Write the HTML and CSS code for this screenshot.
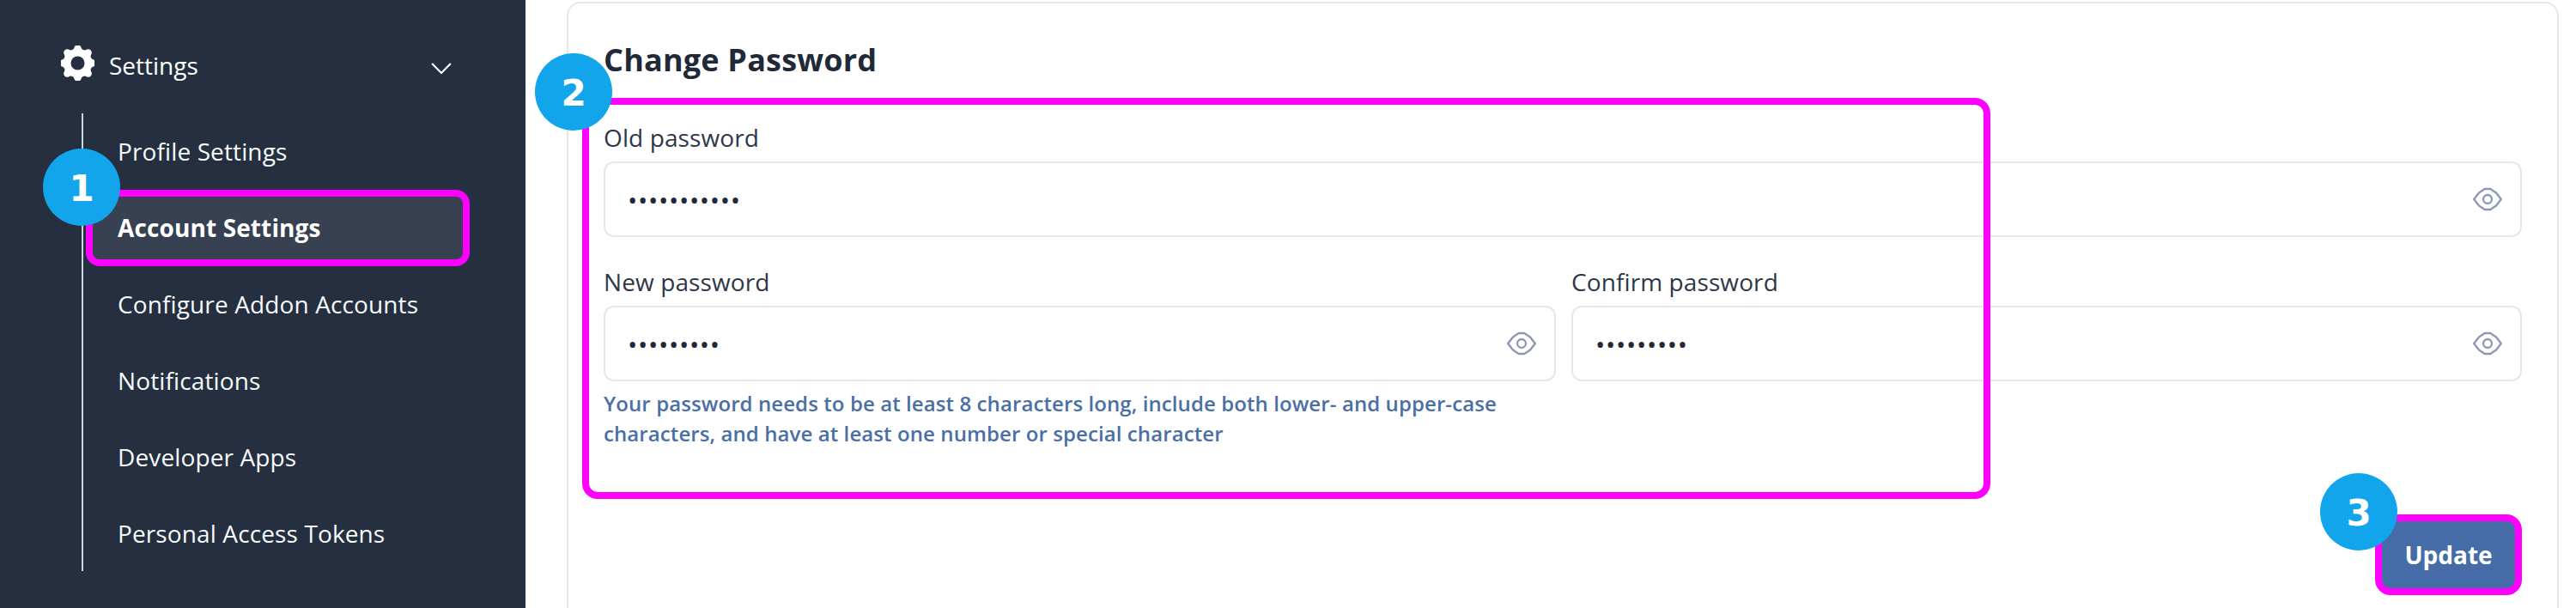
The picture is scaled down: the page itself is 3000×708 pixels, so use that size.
FILE: index.html
```html
<!DOCTYPE html>
<html lang="en">
<head>
    <meta charset="UTF-8">
    <title>Account Settings</title>
    <link rel="stylesheet" href="styles.css">
</head>
<body>
    <div class="page">
        <aside class="sidebar">
            <div class="nav-head">
                <svg class="gear" viewBox="2.7 2.4 14.6 15.2"><path fill-rule="evenodd" d="M11.49 3.17c-.38-1.56-2.6-1.56-2.98 0a1.532 1.532 0 01-2.286.948c-1.372-.836-2.942.734-2.106 2.106.54.886.061 2.042-.947 2.287-1.561.379-1.561 2.6 0 2.978a1.532 1.532 0 01.947 2.287c-.836 1.372.734 2.942 2.106 2.106a1.532 1.532 0 012.287.947c.379 1.561 2.6 1.561 2.978 0a1.533 1.533 0 012.287-.947c1.372.836 2.942-.734 2.106-2.106a1.533 1.533 0 01.947-2.287c1.561-.379 1.561-2.6 0-2.978a1.532 1.532 0 01-.947-2.287c.836-1.372-.734-2.942-2.106-2.106a1.532 1.532 0 01-2.287-.947zM10 13a3 3 0 100-6 3 3 0 000 6z"/></svg>
                <span class="nav-title">Settings</span>
                <svg class="chevron" viewBox="0 0 22 12"><path d="M1 1l10 10L21 1"/></svg>
            </div>
            <div class="sub-nav">
                <ul>
                    <li>Profile Settings</li>
                    <li class="active">Account Settings</li>
                    <li>Configure Addon Accounts</li>
                    <li>Notifications</li>
                    <li>Developer Apps</li>
                    <li>Personal Access Tokens</li>
                </ul>
            </div>
        </aside>

        <main class="content">
            <section class="card">
                <h2>Change Password</h2>
                <div class="field">
                    <label>Old password</label>
                    <div class="input-wrap">
                        <input type="password" value="12345678901">
                        <svg class="eye" viewBox="0 0 24 24"><path d="M2.500 12L6 7.500 10 4.800h4L18 7.500 21.500 12 18 16.500 14 19.200h-4L6 16.500z"/><circle cx="12" cy="12" r="3"/></svg>
                    </div>
                </div>
                <div class="field-row">
                    <div class="field">
                        <label>New password</label>
                        <div class="input-wrap">
                            <input type="password" value="123456789">
                            <svg class="eye" viewBox="0 0 24 24"><path d="M2.500 12L6 7.500 10 4.800h4L18 7.500 21.500 12 18 16.500 14 19.200h-4L6 16.500z"/><circle cx="12" cy="12" r="3"/></svg>
                        </div>
                        <p class="hint">Your password needs to be at least 8 characters long, include both lower- and upper-case characters, and have at least one number or special character</p>
                    </div>
                    <div class="field">
                        <label>Confirm password</label>
                        <div class="input-wrap">
                            <input type="password" value="123456789">
                            <svg class="eye" viewBox="0 0 24 24"><path d="M2.500 12L6 7.500 10 4.800h4L18 7.500 21.500 12 18 16.500 14 19.200h-4L6 16.500z"/><circle cx="12" cy="12" r="3"/></svg>
                        </div>
                    </div>
                </div>
                <div class="actions">
                    <button class="btn-update">Update</button>
                </div>
            </section>
        </main>

        <!-- annotations on top of the screenshot -->
        <div class="mark-box"></div>
        <div class="step step-1">1</div>
        <div class="step step-2">2</div>
        <div class="step step-3">3</div>
    </div>
</body>
</html>
```

FILE: styles.css
```css
*{margin:0;padding:0;box-sizing:border-box;}
li{list-style:none;}
body{font-family:"Open Sans","Noto Sans",sans-serif;background:#fff;}

.page{position:relative;display:flex;width:3000px;height:708px;overflow:hidden;}

/* sidebar */
.sidebar{width:612px;flex-shrink:0;background:#252f3f;color:#fff;padding-top:53px;}
.nav-head{display:flex;align-items:center;height:41px;padding-left:71px;margin-bottom:41px;}
.gear{width:39px;height:41px;fill:#fff;}
.nav-title{font-size:28px;line-height:41px;margin:6px 0 0 17px;flex:1;}
.chevron{width:24px;height:13px;margin-right:86px;margin-top:11px;fill:none;stroke:#fff;stroke-width:2;}

.sub-nav{margin-left:95px;width:452px;height:533px;border-left:2px solid #cbd5e0;padding-left:3px;}
.sub-nav ul{margin-top:-3px;}
.sub-nav li{height:89px;line-height:73px;font-size:28px;letter-spacing:.12px;padding-left:29px;border:8px solid transparent;border-radius:16px;white-space:nowrap;color:#f7fafc;}
.sub-nav li.active{background:#374151;border-color:#f0f;font-weight:700;color:#fff;}

/* main */
.content{flex:1;padding:2px 20px 0 48px;}
.card{height:900px;border:2px solid #e5e7eb;border-radius:16px;padding:42px 41px 0;color:#1f2937;}
.card h2{font-size:36px;line-height:48px;font-weight:700;letter-spacing:.2px;color:#1f2937;margin-bottom:47px;}

.field label{display:block;font-size:28px;line-height:38px;letter-spacing:.1px;color:#2d3748;margin-bottom:9px;}
.field-row{display:grid;grid-template-columns:1109px 1fr;gap:18px;margin-top:33px;}

.input-wrap{position:relative;}
.input-wrap input{display:block;width:100%;height:88px;border:2px solid #e5e7eb;border-radius:12px;padding:0 26px;font-family:inherit;font-size:30px;letter-spacing:.7px;color:#1f2937;background:#fff;outline:none;}
.eye{position:absolute;right:20px;top:24px;width:40px;height:40px;fill:none;stroke:#8b98b3;stroke-width:1.4;stroke-linejoin:round;}

.hint{margin-top:8px;font-size:24px;line-height:35px;font-weight:600;letter-spacing:.09px;color:#4a6fa5;}

.actions{display:flex;justify-content:flex-end;margin-top:77px;}
.btn-update{width:171px;height:94px;border:8px solid #f0f;border-radius:18px;background:#466ca8;color:#fff;font-family:inherit;font-size:28px;font-weight:700;}

/* annotations */
.mark-box{position:absolute;left:678px;top:114px;width:1640px;height:467px;border:8px solid #f0f;border-radius:18px;}
.step{position:absolute;width:90px;height:90px;border-radius:50%;background:#12a5eb;color:#fff;font-family:"DejaVu Sans",sans-serif;font-size:42px;font-weight:700;line-height:93px;text-align:center;}
.step-1{left:50px;top:173px;}
.step-2{left:623px;top:62px;}
.step-3{left:2702px;top:551px;}
```
